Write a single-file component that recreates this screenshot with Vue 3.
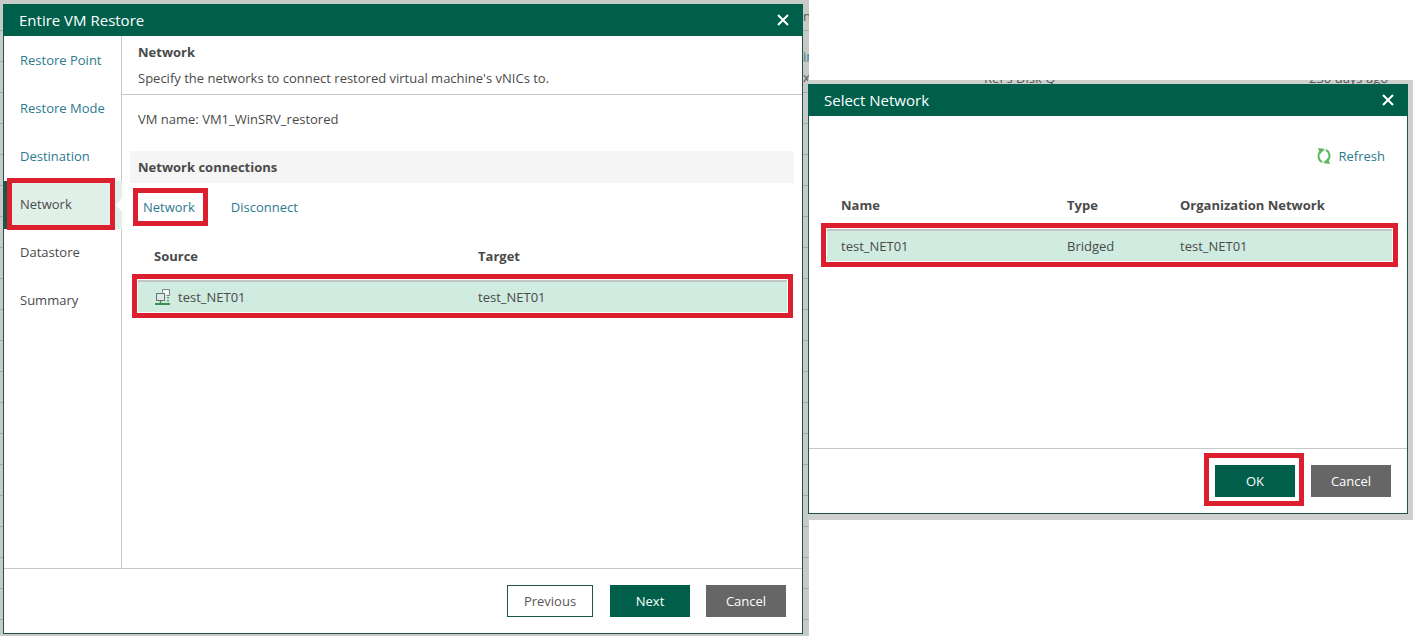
<template>
  <div class="canvas">
    <div class="backdrop main-backdrop">
      <span class="peek peek-a">n</span>
      <span class="peek peek-b">ir</span>
      <span class="peek peek-e">xt</span>
    </div>
    <div class="backdrop picker-backdrop">
      <span class="peek peek-c">Ref's Disk Q</span>
      <span class="peek peek-d">230 days ago</span>
    </div>

    <section class="dialog restore">
      <header class="title">
        <span>Entire VM Restore</span>
        <svg class="close" viewBox="0 0 12 12"><path d="M1 1l10 10M11 1L1 11" /></svg>
      </header>
      <div class="body">
        <nav class="steps">
          <div
            v-for="step in steps"
            :key="step"
            class="step"
            :class="{ active: step === 'Network', muted: ['Datastore', 'Summary'].includes(step) }"
          >{{ step }}</div>
        </nav>
        <main class="content">
          <div class="intro">
            <h2>Network</h2>
            <p>Specify the networks to connect restored virtual machine's vNICs to.</p>
          </div>
          <div class="vm-name">VM name: VM1_WinSRV_restored</div>
          <div class="section-title">Network connections</div>
          <div class="toolbar">
            <a class="tool marked">Network</a>
            <a class="tool">Disconnect</a>
          </div>
          <div class="table-head">
            <div class="col-source">Source</div>
            <div>Target</div>
          </div>
          <div class="table-row">
            <div class="col-source source-cell">
              <svg class="vm-icon" width="16" height="17" viewBox="0 0 16 17" fill="none">
                <path d="M7.500 3.500V0.500h7v6h-3" fill="#f4f7f6" stroke="#7a8585" />
                <rect x="1.500" y="4.500" width="8" height="7" fill="#dfe7e4" stroke="#667373" />
                <path d="M0 15h15" stroke="#3f8f52" stroke-width="2" />
                <path d="M5.500 12v2" stroke="#3f8f52" stroke-width="1.500" />
                <path d="M13 8v1.500M13 11v1.500" stroke="#3f8f52" stroke-width="1.500" />
              </svg>
              <span>test_NET01</span>
            </div>
            <div>test_NET01</div>
          </div>
        </main>
      </div>
      <footer class="actions">
        <button class="btn outline">Previous</button>
        <button class="btn primary">Next</button>
        <button class="btn grey">Cancel</button>
      </footer>
    </section>

    <section class="dialog picker">
      <header class="title">
        <span>Select Network</span>
        <svg class="close" viewBox="0 0 12 12"><path d="M1 1l10 10M11 1L1 11" /></svg>
      </header>
      <div class="picker-body">
        <div class="refresh">
          <svg width="16" height="18" viewBox="0 0 16 18" fill="none" stroke="#5cb85c" stroke-width="2">
            <path d="M4 5A6.500 6.500 0 0 0 6 15" />
            <path d="M12 13A6.500 6.500 0 0 0 10 3" />
            <path d="M2 1L9 2L4 7Z" fill="#5cb85c" stroke="none" />
            <path d="M14 17L7 16L12 11Z" fill="#5cb85c" stroke="none" />
          </svg>
          <a>Refresh</a>
        </div>
        <div class="net-head">
          <div class="net-name">Name</div>
          <div class="net-type">Type</div>
          <div>Organization Network</div>
        </div>
        <div class="net-row">
          <div class="net-name">test_NET01</div>
          <div class="net-type">Bridged</div>
          <div>test_NET01</div>
        </div>
      </div>
      <footer class="actions">
        <button class="btn primary marked-ok">OK</button>
        <button class="btn grey">Cancel</button>
      </footer>
    </section>
  </div>
</template>

<script setup>
const steps = ['Restore Point', 'Restore Mode', 'Destination', 'Network', 'Datastore', 'Summary'];
</script>

<style>
html,
body {
  margin: 0;
  background: #fff;
}
</style>

<style scoped>
.canvas {
  position: relative;
  width: 1413px;
  height: 636px;
  overflow: hidden;
  background: #fff;
  font-family: "Open Sans", "Liberation Sans", sans-serif;
  font-size: 13px;
  color: #4a4a4a;
}

.backdrop {
  position: absolute;
  overflow: hidden;
}

.main-backdrop {
  left: 0;
  top: 0;
  width: 809px;
  height: 636px;
  background: repeating-linear-gradient(180deg, #c6cbc8 0 30px, #a3aca8 30px 31px);
}

.picker-backdrop {
  left: 808px;
  top: 80px;
  width: 605px;
  height: 440px;
  background: #cfd1cf;
}

.peek {
  position: absolute;
  color: #555;
}

.peek-a {
  left: 803px;
  top: 7px;
}

.peek-b {
  left: 803px;
  top: 47px;
  color: #2c7a8e;
}

.peek-e {
  left: 803px;
  top: 68px;
}

.peek-c {
  left: 176px;
  top: -11px;
}

.peek-d {
  left: 501px;
  top: -11px;
}

.dialog {
  position: absolute;
  display: flex;
  flex-direction: column;
  box-sizing: border-box;
  background: #fff;
  border: 1px solid #1d5549;
  border-top: 0;
}

.restore {
  left: 3px;
  top: 4px;
  width: 800px;
  height: 630px;
}

.picker {
  left: 808px;
  top: 84px;
  width: 600px;
  height: 430px;
}

.title {
  display: flex;
  align-items: center;
  justify-content: space-between;
  flex: none;
  height: 32px;
  padding: 0 14px 0 16px;
  margin: 0 -1px;
  background: #005f4b;
  color: #fff;
  font-size: 15px;
}

.close {
  width: 12px;
  height: 12px;
  fill: none;
  stroke: #fff;
  stroke-width: 2;
}

.body {
  display: flex;
  flex: 1;
  min-height: 0;
}

.steps {
  flex: none;
  width: 118px;
  box-sizing: border-box;
  padding-top: 1px;
  background: #fff;
  border-right: 1px solid #c8c8c8;
}

.step {
  height: 48px;
  padding-left: 16px;
  line-height: 46px;
  color: #2c7a8e;
}

.step.muted {
  color: #4a4a4a;
}

.step.active {
  position: relative;
  margin-right: -1px;
  background: #e0f0e8;
  box-shadow: inset 3px 0 0 #1d5549;
  color: #4a4a4a;
}

/* red annotation frame */
.step.active::after {
  content: "";
  position: absolute;
  left: 3px;
  top: -3px;
  bottom: -1px;
  width: 108px;
  box-sizing: border-box;
  border: 5px solid #dc1f2e;
}

/* notch pointing at the active step */
.step.active::before {
  content: "";
  position: absolute;
  right: 0;
  top: 17px;
  border-style: solid;
  border-width: 7px 6px 7px 0;
  border-color: transparent #fff transparent transparent;
}

.content {
  flex: 1;
  min-width: 0;
}

.intro {
  height: 59px;
  box-sizing: border-box;
  padding: 7px 16px 0;
  border-bottom: 1px solid #c8c8c8;
}

.intro h2 {
  margin: 0;
  font-size: 13px;
  font-weight: 700;
  line-height: 18px;
}

.intro p {
  margin: 8px 0 0;
  line-height: 18px;
}

.vm-name {
  padding: 15px 16px 0;
  line-height: 18px;
}

.section-title {
  height: 32px;
  margin: 23px 8px 0;
  padding-left: 8px;
  background: #f5f5f5;
  font-weight: 700;
  line-height: 32px;
}

.toolbar {
  display: flex;
  align-items: center;
  gap: 21px;
  height: 48px;
  padding-left: 16px;
}

.tool {
  color: #2c7a8e;
  padding: 0 7px;
  line-height: 28px;
}

.tool.marked {
  padding: 0 8px 0 5px;
  outline: 5px solid #dc1f2e;
}

.table-head {
  display: flex;
  height: 36px;
  padding-left: 32px;
  font-weight: 700;
  line-height: 50px;
}

.col-source {
  flex: none;
  width: 324px;
}

.table-row {
  display: flex;
  align-items: center;
  height: 32px;
  margin: 13px 15px 0 16px;
  padding-left: 17px;
  background: #d0ebe0;
  border-top: 2px solid #c4c4c4;
  box-sizing: border-box;
  outline: 5px solid #dc1f2e;
  outline-offset: 1px;
}

.source-cell {
  display: flex;
  align-items: center;
  gap: 7px;
  width: 323px;
}

.actions {
  display: flex;
  justify-content: flex-end;
  gap: 16px;
  flex: none;
  height: 65px;
  padding: 16px 16px 0 0;
  box-sizing: border-box;
  border-top: 1px solid #c8c8c8;
}

.btn {
  width: 80px;
  height: 32px;
  padding: 0;
  border: 0;
  font: inherit;
  color: #fff;
}

.btn.outline {
  width: 86px;
  margin-right: 1px;
  background: #fff;
  border: 1px solid #1d5549;
  color: #555;
}

.btn.primary {
  background: #005f4b;
}

.btn.grey {
  background: #666;
}

.marked-ok {
  position: relative;
}

.marked-ok::after {
  content: "";
  position: absolute;
  inset: -12px -9px -9px -11px;
  border: 5px solid #dc1f2e;
}

.picker-body {
  flex: 1;
  min-height: 0;
}

.refresh {
  display: flex;
  align-items: center;
  justify-content: flex-end;
  gap: 7px;
  height: 40px;
  padding: 20px 22px 0 0;
  color: #2c7a8e;
}

.net-head,
.net-row {
  display: flex;
}

.net-name {
  width: 226px;
}

.net-type {
  width: 113px;
}

.net-head {
  height: 36px;
  margin-top: 11px;
  padding-left: 32px;
  font-weight: 700;
  line-height: 36px;
}

.net-row {
  height: 32px;
  margin: 6px 15px 0 18px;
  padding-left: 14px;
  background: #d0ebe0;
  border-top: 2px solid #c4c4c4;
  box-sizing: border-box;
  line-height: 30px;
  outline: 5px solid #dc1f2e;
  outline-offset: 1px;
}
</style>
